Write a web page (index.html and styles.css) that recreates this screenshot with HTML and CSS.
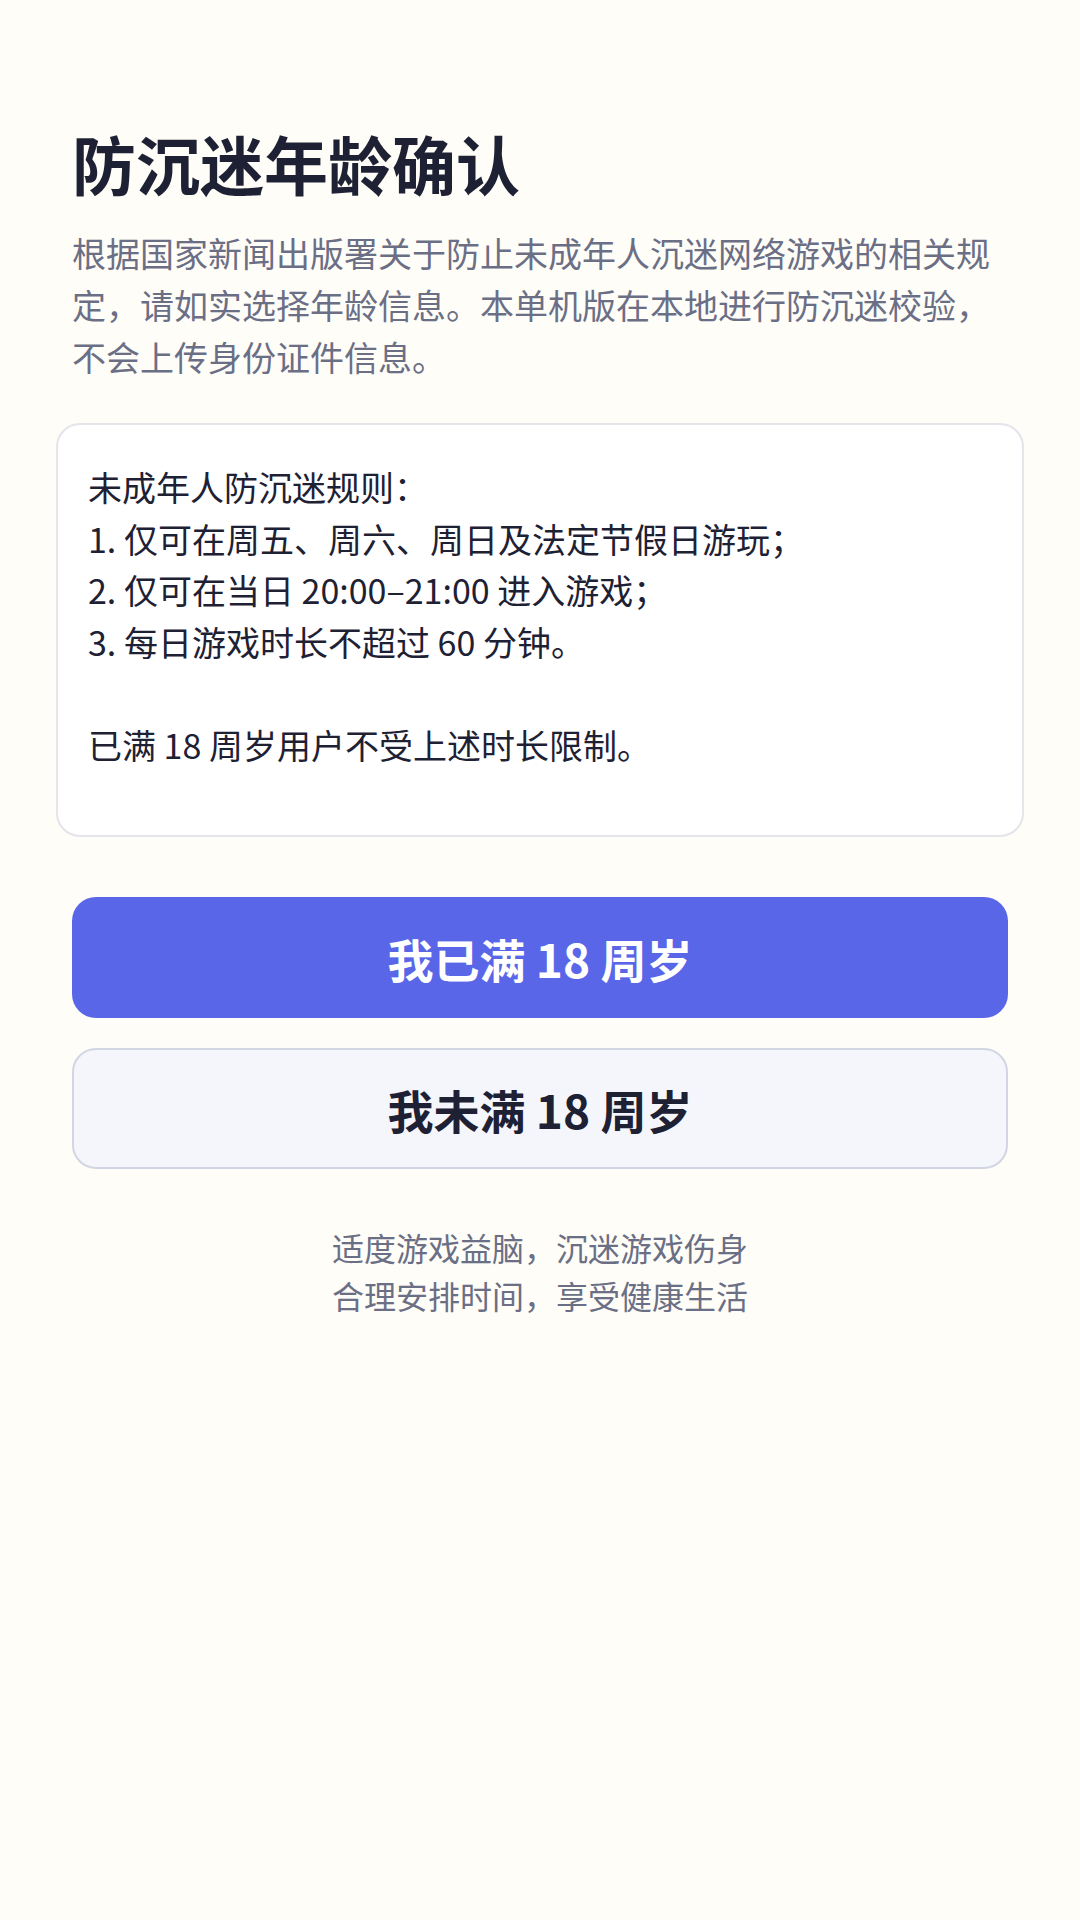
FILE: index.html
```html
<!DOCTYPE html>
<html lang="zh-CN">
<head>
  <meta charset="UTF-8" />
  <title>防沉迷年龄确认</title>
  <link rel="stylesheet" href="styles.css">
</head>
<body>
  <div class="page">
    <h1>防沉迷年龄确认</h1>
    <p class="intro">根据国家新闻出版署关于防止未成年人沉迷网络游戏的相关规定，请如实选择年龄信息。本单机版在本地进行防沉迷校验，不会上传身份证件信息。</p>

    <div class="rules">
      <div>未成年人防沉迷规则：</div>
      <div>1. 仅可在周五、周六、周日及法定节假日游玩；</div>
      <div>2. 仅可在当日 20:00–21:00 进入游戏；</div>
      <div>3. 每日游戏时长不超过 60 分钟。</div>
      <div class="blank"></div>
      <div>已满 18 周岁用户不受上述时长限制。</div>
    </div>

    <div class="actions">
      <button class="btn primary">我已满 18 周岁</button>
      <button class="btn secondary">我未满 18 周岁</button>
    </div>

    <p class="tip">适度游戏益脑，沉迷游戏伤身<br>合理安排时间，享受健康生活</p>
  </div>
</body>
</html>
```

FILE: styles.css
```css
* {
  margin: 0;
  padding: 0;
  box-sizing: border-box;
  font-family: "Noto Sans CJK SC", "Noto Sans", sans-serif;
}
body {
  background: #fffdf8;
  color: #1e2133;
}
.page {
  padding: 121px 72px 0;
}
h1 {
  font-size: 64px;
  font-weight: 700;
  line-height: 1.3;
  color: #1e2133;
}
.intro {
  margin-top: 23px;
  font-size: 34px;
  line-height: 52px;
  color: #6b6f85;
}
.rules {
  margin: 40px -16px 0;
  background: #ffffff;
  border: 2px solid #e4e4ea;
  border-radius: 24px;
  padding: 36px 30px 65px;
  font-size: 34px;
  line-height: 51.5px;
  color: #1e2133;
}
.rules .blank {
  height: 51.5px;
}
.actions {
  margin-top: 60px;
  display: flex;
  flex-direction: column;
  gap: 30px;
}
.btn {
  height: 121px;
  border-radius: 24px;
  font-size: 46px;
  font-weight: 700;
  cursor: pointer;
}
.primary {
  background: #5966e8;
  color: #ffffff;
  border: none;
}
.secondary {
  background: #f4f6fb;
  color: #1e2133;
  border: 2px solid #d2d6e2;
}
.tip {
  margin-top: 54px;
  text-align: center;
  font-size: 32px;
  line-height: 48px;
  color: #6b6f85;
}
```
